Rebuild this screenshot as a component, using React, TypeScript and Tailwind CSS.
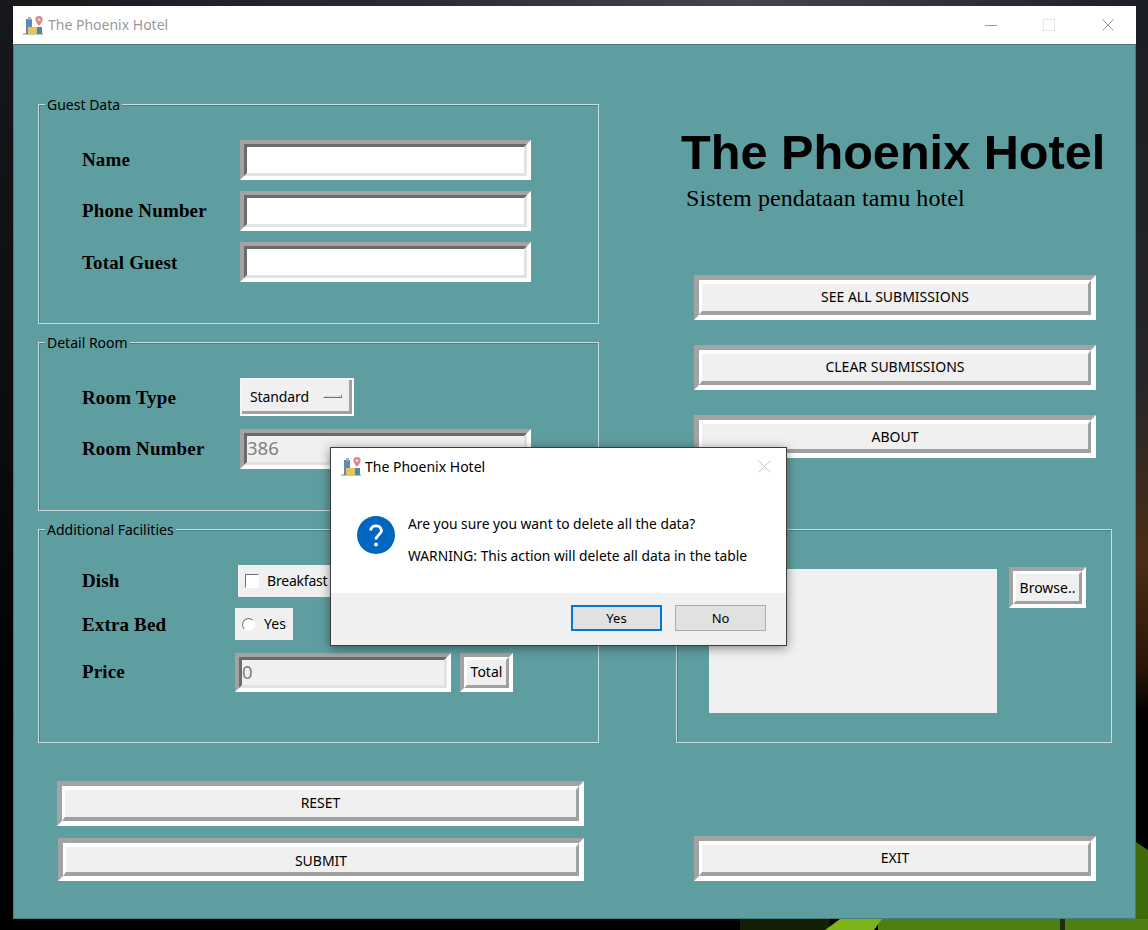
import React from 'react';

const ui = "font-['Noto_Sans',sans-serif]";
const serifBold = "font-['Liberation_Serif',serif] font-bold text-[19px] tracking-[0.15px] text-black";

const AppIcon = () => (
  <svg width="21" height="21" viewBox="0 0 21 21" className="shrink-0">
    <rect x="0" y="18" width="20" height="2" fill="#b4cbb8" />
    <rect x="3" y="4" width="6" height="15" fill="#5b8ab5" />
    <rect x="5" y="2" width="3" height="3" fill="#8fb4d4" />
    <rect x="5" y="12" width="9" height="7" fill="#e3c75c" />
    <rect x="14" y="12" width="5" height="7" fill="#4f86b0" />
    <path d="M16 1a3.600 3.600 0 0 1 3.600 3.600C19.600 7.200 16 11 16 11s-3.600-3.800-3.600-6.400A3.600 3.600 0 0 1 16 1z" fill="#e67f86" />
    <circle cx="16" cy="4.600" r="1.600" fill="#bfe0ee" />
  </svg>
);

const Wallpaper = () => (
  <svg className="absolute inset-0" width="1148" height="930" viewBox="0 0 1148 930">
    <defs>
      <linearGradient id="left" x1="0" y1="0" x2="0" y2="1">
        <stop offset="0" stopColor="#17181c" />
        <stop offset="0.5" stopColor="#0b0b0c" />
        <stop offset="0.8" stopColor="#000000" />
      </linearGradient>
      <linearGradient id="right" x1="0" y1="0" x2="0" y2="1">
        <stop offset="0" stopColor="#1b1e24" />
        <stop offset="0.4" stopColor="#24262a" />
        <stop offset="0.6" stopColor="#4a2c16" />
        <stop offset="0.72" stopColor="#2a1508" />
        <stop offset="0.77" stopColor="#000000" />
        <stop offset="1" stopColor="#000000" />
      </linearGradient>
      <linearGradient id="top" x1="0" y1="0" x2="1" y2="0">
        <stop offset="0" stopColor="#17181c" />
        <stop offset="0.35" stopColor="#2a2a32" />
        <stop offset="0.65" stopColor="#46434f" />
        <stop offset="1" stopColor="#1b1e24" />
      </linearGradient>
    </defs>
    <rect x="0" y="0" width="1148" height="930" fill="url(#left)" />
    <rect x="1136" y="0" width="12" height="930" fill="url(#right)" />
    <rect x="0" y="0" width="1148" height="6" fill="url(#top)" />
    <rect x="0" y="919" width="1148" height="11" fill="#000000" />
    <path d="M1136 842L1148 850V930H1136Z" fill="#3f6a0c" />
    <rect x="740" y="919" width="90" height="11" fill="#141f08" />
    <rect x="878" y="919" width="270" height="11" fill="#4f7f12" />
    <path d="M825 930L840 919H882L874 930Z" fill="#7db41a" />
    <rect x="1060" y="919" width="5" height="11" fill="#1d2f08" />
  </svg>
);

// Tk style raised button: two bevel layers
const Raised = ({ label, className, inner = 'border-t-4 border-l-[3px] border-r-[3px] border-b-4', outer = 'border-[5px]', text = 'pb-[3px]' }: { label: string; className: string; inner?: string; outer?: string; text?: string }) => (
  <div className={`${className} ${outer} box-border border-t-[#a3a3a3] border-l-[#a3a3a3] border-r-white border-b-white`}>
    <div className={`h-full ${inner} ${text} border-t-white border-l-white border-r-[#a0a0a0] border-b-[#a0a0a0] bg-[#f0f0f0] flex items-center justify-center ${ui} text-[14px] text-black`}>
      {label}
    </div>
  </div>
);

// Tk style sunken entry
const Entry = ({ value, disabled, className = 'w-[291px] h-[40px]' }: { value?: string; disabled?: boolean; className?: string }) => (
  <div className={`${className} box-border border-4 border-t-[#a3a3a3] border-l-[#a3a3a3] border-r-white border-b-white`}>
    <div className={`h-full border-[3px] pb-[2px] border-t-[#6b6b6b] border-l-[#6b6b6b] border-r-[#e3e3e3] border-b-[#e3e3e3] flex items-center ${ui} text-[18.500px] text-[#808080] ${disabled ? 'bg-[#f0f0f0]' : 'bg-white'}`}>
      {value}
    </div>
  </div>
);

const Group = ({ legend, className, children }: { legend?: string; className: string; children: React.ReactNode }) => (
  <div className={`relative box-border border border-[#c6dede] shadow-[inset_1px_1px_0_#4c8082] ${className}`}>
    {legend && (
      <span className={`absolute left-[6px] top-[-9px] bg-[#5f9ea0] px-[2px] leading-[18px] ${ui} text-[14px] text-black`}>{legend}</span>
    )}
    {children}
  </div>
);

const Label = ({ text, className }: { text: string; className: string }) => (
  <div className={`${className} ${serifBold} shrink-0`}>{text}</div>
);

export default function App() {
  return (
    <div className="relative w-[1148px] h-[930px] overflow-hidden pt-[6px] pl-[13px]">
      <Wallpaper />

      <div className="relative w-[1123px] h-[913px] flex flex-col">
        {/* title bar */}
        <div className="h-[38px] shrink-0 bg-white flex items-center pl-[10px]">
          <AppIcon />
          <span className={`ml-[4px] pb-[2px] ${ui} text-[14px] text-[#999999]`}>The Phoenix Hotel</span>
          <div className="ml-auto flex items-center pr-[22px]">
            <div className="w-[12px] h-[1px] bg-[#999999]" />
            <div className="ml-[46px] w-[12px] h-[12px] border border-[#e5e5e5]" />
            <svg className="ml-[47px]" width="12" height="12" viewBox="0 0 12 12">
              <path d="M0.500 0.500L11.500 11.500M11.500 0.500L0.500 11.500" stroke="#999999" strokeWidth="1" />
            </svg>
          </div>
        </div>

        {/* window body */}
        <div className="flex-1 bg-[#5f9ea0] box-border border-x border-b border-t border-[#4a7a7c] flex pl-[24px]">
          {/* left column */}
          <div className="w-[561px] shrink-0 pt-[59px] flex flex-col">
            <Group legend="Guest Data" className="h-[220px] pl-[43px] pt-[35px] flex flex-col gap-[11px]">
              <div className="flex items-center">
                <Label text="Name" className="w-[158px]" />
                <Entry />
              </div>
              <div className="flex items-center">
                <Label text="Phone Number" className="w-[158px]" />
                <Entry />
              </div>
              <div className="flex items-center">
                <Label text="Total Guest" className="w-[158px] pt-[2px]" />
                <Entry />
              </div>
            </Group>

            <Group legend="Detail Room" className="mt-[18px] h-[169px] pl-[43px] pt-[35px] flex flex-col gap-[13px]">
              <div className="flex items-center">
                <Label text="Room Type" className="w-[158px] pt-[2px]" />
                <div className="w-[114px] h-[38px] box-border border-2 border-[#f4f4f4] border-r-white border-b-white bg-[#f0f0f0]">
                  <div className="h-full box-border border-r-[3px] border-b-[3px] border-r-[#a0a0a0] border-b-[#a0a0a0] flex items-center pl-[8px]">
                    <span className={`pt-[2px] ${ui} text-[14px] tracking-[-0.1px] text-black`}>Standard</span>
                    <div className="ml-[14px] w-[19px] h-[4px] border border-t-white border-l-white border-r-[#8a8a8a] border-b-[#6f6f6f] bg-[#e0e0e0]" />
                  </div>
                </div>
              </div>
              <div className="flex items-center">
                <Label text="Room Number" className="w-[158px]" />
                <Entry value="386" disabled />
              </div>
            </Group>

            <Group legend="Additional Facilities" className="mt-[18px] h-[214px] pl-[43px] pt-[35px] flex flex-col">
              <div className="flex items-center">
                <Label text="Dish" className="w-[156px]" />
                <div className="w-[110px] h-[32px] bg-[#f0f0f0] flex items-center pl-[7px]">
                  <div className="w-[14px] h-[14px] border border-t-[#6f6f6f] border-l-[#6f6f6f] border-r-white border-b-white bg-white" />
                  <span className={`ml-[8px] pb-[2px] ${ui} text-[14px] tracking-[-0.2px] text-black`}>Breakfast</span>
                </div>
              </div>
              <div className="mt-[11px] flex items-center">
                <Label text="Extra Bed" className="w-[153px] pt-[3px]" />
                <div className="w-[58px] h-[32px] bg-[#f0f0f0] flex items-center pl-[7px]">
                  <div className="w-[13px] h-[13px] rounded-full border border-t-[#6f6f6f] border-l-[#6f6f6f] border-r-white border-b-white bg-white" />
                  <span className={`ml-[9px] pb-[1px] ${ui} text-[14px] tracking-[0.1px] text-black`}>Yes</span>
                </div>
              </div>
              <div className="mt-[13px] flex items-center">
                <Label text="Price" className="w-[153px]" />
                <Entry value="0" disabled className="w-[216px] h-[39px]" />
                <Raised label="Total" className="ml-[9px] w-[53px] h-[39px]" outer="border-4" inner="border-[3px]" text="pb-[3px]" />
              </div>
            </Group>

            <Raised label="RESET" className="mt-[38px] ml-[19px] w-[527px] h-[45px]" />
            <Raised label="SUBMIT" className="mt-[12px] ml-[20px] w-[526px] h-[43px]" text="pt-[1px]" />
          </div>

          {/* right column */}
          <div className="ml-[77px] w-[436px] shrink-0 flex flex-col">
            <div className="mt-[78px] ml-[5px] h-[58px] whitespace-nowrap font-['Liberation_Sans',sans-serif] font-bold text-[48.650px] leading-[58px] text-black">
              The Phoenix Hotel
            </div>
            <div className="mt-[2px] ml-[10px] h-[30px] font-['Liberation_Serif',serif] text-[24px] tracking-[0.08px] leading-[30px] text-black whitespace-nowrap">
              Sistem pendataan tamu hotel
            </div>
            <Raised label="SEE ALL SUBMISSIONS" className="mt-[62px] ml-[18px] w-[402px] h-[45px]" />
            <Raised label="CLEAR SUBMISSIONS" className="mt-[25px] ml-[18px] w-[402px] h-[45px]" />
            <Raised label="ABOUT" className="mt-[25px] ml-[18px] w-[402px] h-[43px]" text="pb-[1px]" />
            <Group className="mt-[71px] h-[214px] pl-[32px] pt-[39px] flex items-start">
              <div className="w-[288px] h-[144px] bg-[#f0f0f0]" />
              <Raised label="Browse.." className="ml-[12px] mt-[-2px] w-[77px] h-[41px]" outer="border-4" inner="border-[3px]" text="pb-[1px]" />
            </Group>
            <Raised label="EXIT" className="mt-[93px] ml-[18px] w-[402px] h-[45px]" />
          </div>
        </div>
      </div>

      {/* message box */}
      <div className="absolute left-[330px] top-[447px] w-[457px] h-[199px] box-border border border-[#3c3c3c] bg-white shadow-[0_2px_10px_rgba(0,0,0,0.45)] flex flex-col">
        <div className="h-[37px] shrink-0 flex items-center pl-[10px] pr-[15px]">
          <AppIcon />
          <span className={`ml-[3px] ${ui} text-[14px] text-black`}>The Phoenix Hotel</span>
          <svg className="ml-auto" width="13" height="13" viewBox="0 0 13 13">
            <path d="M0.500 0.500L12.500 12.500M12.500 0.500L0.500 12.500" stroke="#c4c4c4" strokeWidth="1" />
          </svg>
        </div>
        <div className="flex-1 flex pl-[26px] pt-[29px]">
          <svg className="shrink-0 mt-[2px]" width="38" height="38" viewBox="0 0 38 38">
            <circle cx="19" cy="19" r="19" fill="#0067c0" />
            <path d="M13.500 14.500a5.600 5.600 0 0 1 11 0c0 4-5.500 4.500-5.500 9" fill="none" stroke="#ffffff" strokeWidth="2.800" />
            <circle cx="19" cy="28.500" r="1.900" fill="#ffffff" />
          </svg>
          <div className={`ml-[13px] ${ui} text-[13.800px] text-black`}>
            <div className="h-[20px] leading-[20px]">Are you sure you want to delete all the data?</div>
            <div className="mt-[12px] h-[20px] leading-[20px]">WARNING: This action will delete all data in the table</div>
          </div>
        </div>
        <div className="h-[52px] shrink-0 bg-[#f0f0f0] flex justify-end items-start pt-[12px] pr-[20px] gap-[13px]">
          <div className={`w-[91px] h-[26px] box-border border-2 border-[#0078d7] bg-[#e1e1e1] flex items-center justify-center pt-[1px] ${ui} text-[13px] text-black`}>Yes</div>
          <div className={`w-[91px] h-[26px] box-border border border-[#adadad] bg-[#e1e1e1] flex items-center justify-center pt-[1px] ${ui} text-[13px] text-black`}>No</div>
        </div>
      </div>
    </div>
  );
}
